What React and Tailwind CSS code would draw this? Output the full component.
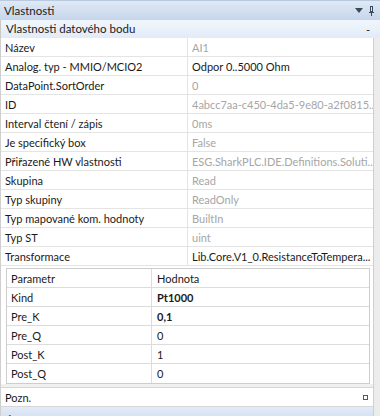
import React from 'react'

const rows = [
  { name: 'Název', value: 'AI1', dim: true },
  { name: 'Analog. typ - MMIO/MCIO2', value: 'Odpor 0..5000 Ohm' },
  { name: 'DataPoint.SortOrder', value: '0', dim: true },
  { name: 'ID', value: '4abcc7aa-c450-4da5-9e80-a2f0815...', dim: true },
  { name: 'Interval čtení / zápis', value: '0ms', dim: true },
  { name: 'Je specifický box', value: 'False', dim: true },
  { name: 'Přiřazené HW vlastnosti', value: 'ESG.SharkPLC.IDE.Definitions.Soluti...', dim: true },
  { name: 'Skupina', value: 'Read', dim: true },
  { name: 'Typ skupiny', value: 'ReadOnly', dim: true },
  { name: 'Typ mapované kom. hodnoty', value: 'BuiltIn', dim: true },
  { name: 'Typ ST', value: 'uint', dim: true },
  { name: 'Transformace', value: 'Lib.Core.V1_0.ResistanceToTempera...' },
]

const params = [
  { name: 'Kind', value: 'Pt1000', bold: true },
  { name: 'Pre_K', value: '0,1', bold: true },
  { name: 'Pre_Q', value: '0' },
  { name: 'Post_K', value: '1' },
  { name: 'Post_Q', value: '0' },
]

function App() {
  return (
    <div className="w-[380px] h-[416px] overflow-hidden bg-[#f0f0f0] text-[11px] leading-none text-[#1a1a1a] flex flex-col" style={{ fontFamily: 'Lato, "Noto Sans", sans-serif' }}>
      {/* title bar */}
      <div className="h-[20px] shrink-0 flex items-center justify-between pl-[4px] pr-[5px] bg-gradient-to-b from-[#dfe9f6] to-[#c6d6eb] border-t border-[#b9c9de]">
        <span className="text-[11.5px]">Vlastnosti</span>
        <div className="flex items-center gap-[5px] text-[#3a4a5e]">
          <svg width="8" height="5" viewBox="0 0 8 5"><path d="M0 0h8L4 5z" fill="currentColor" /></svg>
          <svg width="7" height="10" viewBox="0 0 7 10">
            <path d="M2 0h3v6H2z M1 6h5v1H1z M3 7h1v3H3z" fill="currentColor" />
            <path d="M3 1h1v4H3z" fill="#dfe9f6" />
          </svg>
        </div>
      </div>

      {/* section header */}
      <div className="h-[18px] shrink-0 flex items-center justify-between pl-[5px] pr-[10px] bg-gradient-to-b from-[#f1f6fc] to-[#e1ebf7] border-l border-[#c9c9c9]">
        <span className="text-[11.5px]">Vlastnosti datového bodu</span>
        <span>-</span>
      </div>

      <div className="flex flex-1 min-h-0">
        <div className="w-[374px] flex flex-col bg-white border-l border-r border-[#cfcfcf]">
          {rows.map((r) => (
            <div key={r.name} className="h-[19px] shrink-0 grid grid-cols-[187px_1fr] border-b border-[#e4e4e4]">
              <div className="pl-[4px] flex items-center border-r border-[#e4e4e4] whitespace-nowrap">{r.name}</div>
              <div className={`pl-[4px] flex items-center whitespace-nowrap overflow-hidden ${r.dim ? 'text-[#a6a6a6]' : ''}`}>{r.value}</div>
            </div>
          ))}

          {/* parameter table */}
          <div className="pt-[2px] pl-[5px] pr-[3px] shrink-0">
            <div className="border border-[#cdcdcd] bg-white">
              <div className="h-[19px] grid grid-cols-[145px_1fr] border-b border-[#dcdcdc]">
                <div className="pl-[4px] flex items-center border-r border-[#dcdcdc]">Parametr</div>
                <div className="pl-[5px] flex items-center">Hodnota</div>
              </div>
              {params.map((p, i) => (
                <div key={p.name} className={`h-[19px] grid grid-cols-[145px_1fr] ${i < params.length - 1 ? 'border-b border-[#dcdcdc]' : ''}`}>
                  <div className="pl-[4px] flex items-center border-r border-[#dcdcdc]">{p.name}</div>
                  <div className={`pl-[5px] flex items-center ${p.bold ? 'font-bold' : ''}`}>{p.value}</div>
                </div>
              ))}
            </div>
          </div>

          <div className="h-[3px] shrink-0 bg-[#f0f0f0]" />

          {/* note row */}
          <div className="h-[20px] shrink-0 flex items-center justify-between pl-[4px] pr-[5px] border-t border-b border-[#d6d6d6]">
            <span>Pozn.</span>
            <span className="w-[5px] h-[5px] border border-[#e0201e] bg-white" />
          </div>
          <div className="flex-1 bg-gradient-to-b from-[#e3ecf8] to-[#d6e3f3] pl-[6px] pt-[4px] text-[#333] overflow-hidden">ʌ</div>
        </div>
        <div className="flex-1 bg-[#ececec]" />
      </div>
    </div>
  )
}

export default App
